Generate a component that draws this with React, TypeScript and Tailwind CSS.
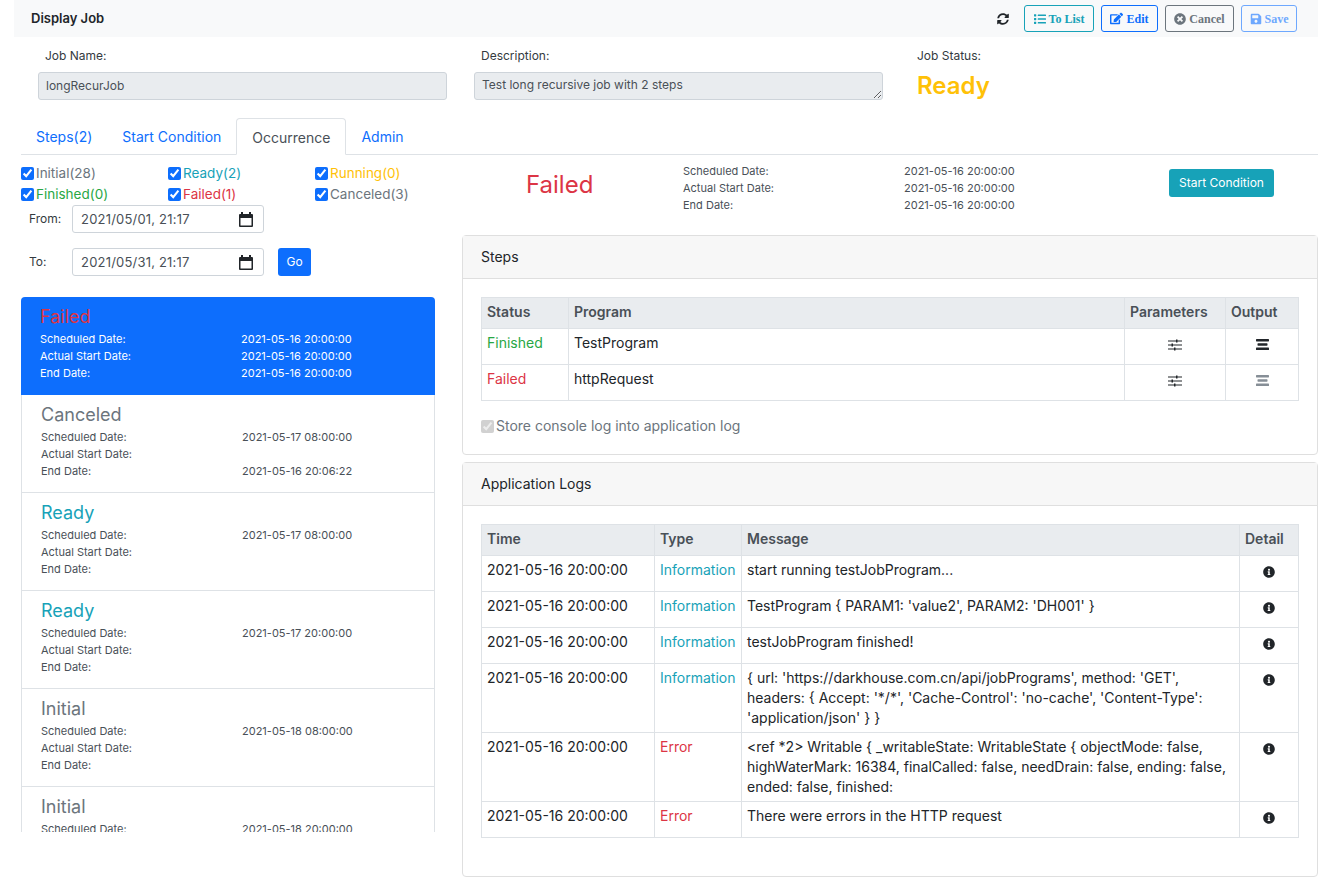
import { FaEdit, FaInfoCircle, FaList, FaSave, FaSyncAlt, FaTimesCircle } from 'react-icons/fa'

const font = { fontFamily: 'Inter, "Liberation Sans", sans-serif' }

const checks = [
  ['Initial(28)', 'text-[#6c757d]'],
  ['Ready(2)', 'text-[#17a2b8]'],
  ['Running(0)', 'text-[#ffc107]'],
  ['Finished(0)', 'text-[#28a745]'],
  ['Failed(1)', 'text-[#dc3545]'],
  ['Canceled(3)', 'text-[#6c757d]'],
]

const occurrences = [
  { title: 'Failed', color: 'text-[#dc3545]', sch: '2021-05-16 20:00:00', act: '2021-05-16 20:00:00', end: '2021-05-16 20:00:00', active: true },
  { title: 'Canceled', color: 'text-[#6c757d]', sch: '2021-05-17 08:00:00', act: '', end: '2021-05-16 20:06:22' },
  { title: 'Ready', color: 'text-[#17a2b8]', sch: '2021-05-17 08:00:00', act: '', end: '' },
  { title: 'Ready', color: 'text-[#17a2b8]', sch: '2021-05-17 20:00:00', act: '', end: '' },
  { title: 'Initial', color: 'text-[#6c757d]', sch: '2021-05-18 08:00:00', act: '', end: '' },
  { title: 'Initial', color: 'text-[#6c757d]', sch: '2021-05-18 20:00:00', act: '', end: '' },
]

const logs = [
  ['Information', 'start running testJobProgram...'],
  ['Information', "TestProgram { PARAM1: 'value2', PARAM2: 'DH001' }"],
  ['Information', 'testJobProgram finished!'],
  ['Information', "{ url: 'https://darkhouse.com.cn/api/jobPrograms', method: 'GET', headers: { Accept: '*/*', 'Cache-Control': 'no-cache', 'Content-Type': 'application/json' } }"],
  ['Error', '<ref *2> Writable { _writableState: WritableState { objectMode: false, highWaterMark: 16384, finalCalled: false, needDrain: false, ending: false, ended: false, finished:'],
  ['Error', 'There were errors in the HTTP request'],
]

function SlidersIcon() {
  return (
    <svg width="14" height="12" viewBox="0 0 14 12" className="text-[#212529]">
      <g fill="currentColor">
        <rect x="0" y="1.5" width="14" height="1" />
        <rect x="0" y="5.5" width="14" height="1" />
        <rect x="0" y="9.5" width="14" height="1" />
        <rect x="8" y="0.5" width="1.5" height="3" />
        <rect x="3.5" y="4.5" width="1.5" height="3" />
        <rect x="6" y="8.5" width="1.5" height="3" />
      </g>
    </svg>
  )
}

function OutputIcon({ muted }: { muted?: boolean }) {
  return (
    <svg width="13" height="11" viewBox="0 0 13 11" className={muted ? 'text-[#868e96]' : 'text-[#212529]'}>
      <g fill="currentColor">
        <rect x="0" y="0" width="13" height="2.4" rx="0.6" />
        <rect x="1.5" y="4.3" width="10" height="2.4" rx="0.6" />
        <rect x="0" y="8.6" width="13" height="2.4" rx="0.6" />
      </g>
    </svg>
  )
}

function CalendarIcon() {
  return (
    <svg width="14" height="15" viewBox="0 0 14 15" className="text-[#212529]">
      <path fill="currentColor" d="M2 0h2v2h6V0h2v2h1a1 1 0 0 1 1 1v11a1 1 0 0 1-1 1H1a1 1 0 0 1-1-1V3a1 1 0 0 1 1-1h1V0zM1.5 6v7.5h11V6h-11z" />
    </svg>
  )
}

function DateField({ value }: { value: string }) {
  return (
    <div className="flex h-[28px] w-[192px] items-center justify-between rounded-[3px] border border-[#ced4da] bg-white pl-[8px] pr-[10px] text-[13px] text-[#495057]">
      <span className="tracking-[0.2px]">{value}</span>
      <CalendarIcon />
    </div>
  )
}

function Card({ title, className, children }: { title: string; className: string; children: React.ReactNode }) {
  return (
    <div className={`rounded-[4px] border border-[#dfdfdf] ${className}`}>
      <div className="flex h-[43px] items-center border-b border-[#dfdfdf] bg-[#f7f7f7] pl-[18px] text-sm text-[#212529]">{title}</div>
      <div className="px-[18px] pt-[18px]">{children}</div>
    </div>
  )
}

const th = 'border border-[#dee2e6] px-[5px] py-[4px] text-left align-top font-semibold text-[#495057]'
const td = 'border border-[#dee2e6] px-[5px] py-[4px] align-top'

export default function App() {
  return (
    <div style={font} className="h-[885px] w-[1321px] overflow-hidden bg-white text-sm text-[#212529]">
      {/* Header bar */}
      <div className="ml-[14px] flex h-[37px] w-[1304px] items-center justify-between bg-[#f8f9fa] pl-[17px] pr-[21px]">
        <span className="text-[13px] font-semibold">Display Job</span>
        <div className="flex items-center font-bold" style={{ fontFamily: '"Liberation Serif", serif' }}>
          <FaSyncAlt className="mr-[15px] text-[12px] text-[#212529]" />
          <button className="flex h-[27px] w-[70px] items-center justify-center gap-[3px] rounded-[3px] border border-[#17a2b8] text-xs text-[#17a2b8]"><FaList className="text-[12px]" />To List</button>
          <button className="ml-[7px] flex h-[27px] w-[57px] items-center justify-center gap-[3px] rounded-[3px] border border-[#0d6efd] text-xs text-[#0d6efd]"><FaEdit className="text-[13px]" />Edit</button>
          <button className="ml-[7px] flex h-[27px] w-[69px] items-center justify-center gap-[3px] rounded-[3px] border border-[#6c757d] text-xs text-[#6c757d]"><FaTimesCircle className="text-[12px]" />Cancel</button>
          <button className="ml-[7px] flex h-[27px] w-[56px] items-center justify-center gap-[3px] rounded-[3px] border border-[#6ea8fe] text-xs text-[#6ea8fe]"><FaSave className="text-[12px]" />Save</button>
        </div>
      </div>

      {/* Job fields */}
      <div className="ml-[38px] flex h-[81px] gap-[27px] pt-[11px]">
        <div className="w-[409px]">
          <div className="pl-[7px] text-xs leading-[16px] text-[#343a40]">Job Name:</div>
          <div className="mt-[8px] flex h-[28px] items-center rounded-[3px] border border-[#ced4da] bg-[#e9ecef] pl-[7px] text-xs text-[#495057]">longRecurJob</div>
        </div>
        <div className="w-[409px]">
          <div className="pl-[7px] text-xs leading-[16px] text-[#343a40]">Description:</div>
          <textarea readOnly value="Test long recursive job with 2 steps" className="mt-[8px] h-[28px] w-full resize-y rounded-[3px] border border-[#ced4da] bg-[#e9ecef] px-[7px] py-[4px] text-xs leading-[16px] text-[#495057]" />
        </div>
        <div className="pl-[7px]">
          <div className="text-xs leading-[16px] text-[#343a40]">Job Status:</div>
          <div className="mt-[4px] text-2xl font-semibold leading-[36px] text-[#ffc107]">Ready</div>
        </div>
      </div>

      {/* Tabs */}
      <div className="ml-[21px] flex h-[37px] w-[1297px] border-b border-[#dee2e6] pl-[0px] text-sm text-[#0d6efd]">
        <div className="px-[15px] pt-[9px]">Steps(2)</div>
        <div className="px-[15px] pt-[9px]">Start Condition</div>
        <div className="-mb-px rounded-t-[4px] border border-b-white border-[#dee2e6] bg-white px-[15px] pt-[9px] text-[#495057]">Occurrence</div>
        <div className="px-[15px] pt-[9px]">Admin</div>
      </div>

      {/* Occurrence pane */}
      <div className="flex">
        <div className="ml-[21px] w-[414px]">
          <div className="grid h-[50px] w-[441px] grid-cols-3 pt-[8px]">
            {checks.map(([label, color]) => (
              <label key={label} className={`flex h-[21px] items-center gap-[2px] text-[13.5px] ${color}`}>
                <input type="checkbox" defaultChecked className="h-[13px] w-[13px] accent-[#0d6efd]" />
                {label}
              </label>
            ))}
          </div>
          <div className="flex h-[28px] items-center pl-[8px]">
            <span className="w-[43px] text-xs text-[#343a40]">From:</span>
            <DateField value="2021/05/01, 21:17" />
          </div>
          <div className="mt-[15px] flex h-[28px] items-center pl-[8px]">
            <span className="w-[43px] text-xs text-[#343a40]">To:</span>
            <DateField value="2021/05/31, 21:17" />
            <button className="ml-[14px] h-[28px] w-[33px] rounded-[3px] bg-[#0d6efd] text-xs text-white">Go</button>
          </div>

          <div className="mt-[21px] h-[535px] overflow-hidden">
            {occurrences.map((o, i) => (
              <div
                key={i}
                className={`h-[98px] px-[19px] pt-[9px] text-[11px] leading-[17px] ${
                  o.active
                    ? 'rounded-t-[4px] bg-[#0d6efd] text-white'
                    : 'border-x border-b border-[#dee2e6] text-[#495057]'
                }`}
              >
                <div className={`mb-[3px] text-lg leading-[22px] ${o.color}`}>{o.title}</div>
                <div className="flex"><span className="w-[201px]">Scheduled Date:</span><span>{o.sch}</span></div>
                <div className="flex"><span className="w-[201px]">Actual Start Date:</span><span>{o.act}</span></div>
                <div className="flex"><span className="w-[201px]">End Date:</span><span>{o.end}</span></div>
              </div>
            ))}
          </div>
        </div>

        <div className="ml-[27px] w-[856px]">
          <div className="flex h-[80px]">
            <div className="ml-[64px] w-[157px] pt-[14px] text-2xl leading-[32px] text-[#dc3545]">Failed</div>
            <div className="w-[221px] pt-[8px] text-[11px] leading-[17px] text-[#495057]">
              <div>Scheduled Date:</div>
              <div>Actual Start Date:</div>
              <div>End Date:</div>
            </div>
            <div className="w-[265px] pt-[8px] text-[11px] leading-[17px] text-[#495057]">
              <div>2021-05-16 20:00:00</div>
              <div>2021-05-16 20:00:00</div>
              <div>2021-05-16 20:00:00</div>
            </div>
            <button className="mt-[14px] h-[28px] w-[105px] rounded-[3px] bg-[#17a2b8] text-xs text-white">Start Condition</button>
          </div>

          <Card title="Steps" className="h-[220px]">
            <table className="w-[818px] table-fixed border-collapse">
              <colgroup>
                <col className="w-[87px]" />
                <col />
                <col className="w-[101px]" />
                <col className="w-[73px]" />
              </colgroup>
              <thead>
                <tr className="h-[31px] bg-[#e9ecef]">
                  <th className={th}>Status</th>
                  <th className={th}>Program</th>
                  <th className={`${th} text-center`}>Parameters</th>
                  <th className={`${th} text-center`}>Output</th>
                </tr>
              </thead>
              <tbody>
                <tr className="h-[36px]">
                  <td className={`${td} text-[#28a745]`}>Finished</td>
                  <td className={td}>TestProgram</td>
                  <td className={td}><div className="flex justify-center pt-[6px]"><SlidersIcon /></div></td>
                  <td className={td}><div className="flex justify-center pt-[6px]"><OutputIcon /></div></td>
                </tr>
                <tr className="h-[36px]">
                  <td className={`${td} text-[#dc3545]`}>Failed</td>
                  <td className={td}>httpRequest</td>
                  <td className={td}><div className="flex justify-center pt-[6px]"><SlidersIcon /></div></td>
                  <td className={td}><div className="flex justify-center pt-[6px]"><OutputIcon muted /></div></td>
                </tr>
              </tbody>
            </table>
            <label className="mt-[15px] flex items-center gap-[2px] text-[#6c757d]">
              <input type="checkbox" defaultChecked disabled className="h-[13px] w-[13px]" />
              Store console log into application log
            </label>
          </Card>

          <Card title="Application Logs" className="mt-[7px] h-[415px]">
            <table className="w-[818px] table-fixed border-collapse">
              <colgroup>
                <col className="w-[173px]" />
                <col className="w-[87px]" />
                <col />
                <col className="w-[59px]" />
              </colgroup>
              <thead>
                <tr className="h-[31px] bg-[#e9ecef]">
                  <th className={th}>Time</th>
                  <th className={th}>Type</th>
                  <th className={th}>Message</th>
                  <th className={`${th} text-center`}>Detail</th>
                </tr>
              </thead>
              <tbody>
                {logs.map(([type, message], i) => (
                  <tr key={i} className="h-[36px]">
                    <td className={td}>2021-05-16 20:00:00</td>
                    <td className={`${td} ${type === 'Error' ? 'text-[#dc3545]' : 'text-[#17a2b8]'}`}>{type}</td>
                    <td className={td}>{message}</td>
                    <td className={td}><div className="flex justify-center pt-[6px]"><FaInfoCircle className="text-[12px] text-[#212529]" /></div></td>
                  </tr>
                ))}
              </tbody>
            </table>
          </Card>
        </div>
      </div>
    </div>
  )
}
